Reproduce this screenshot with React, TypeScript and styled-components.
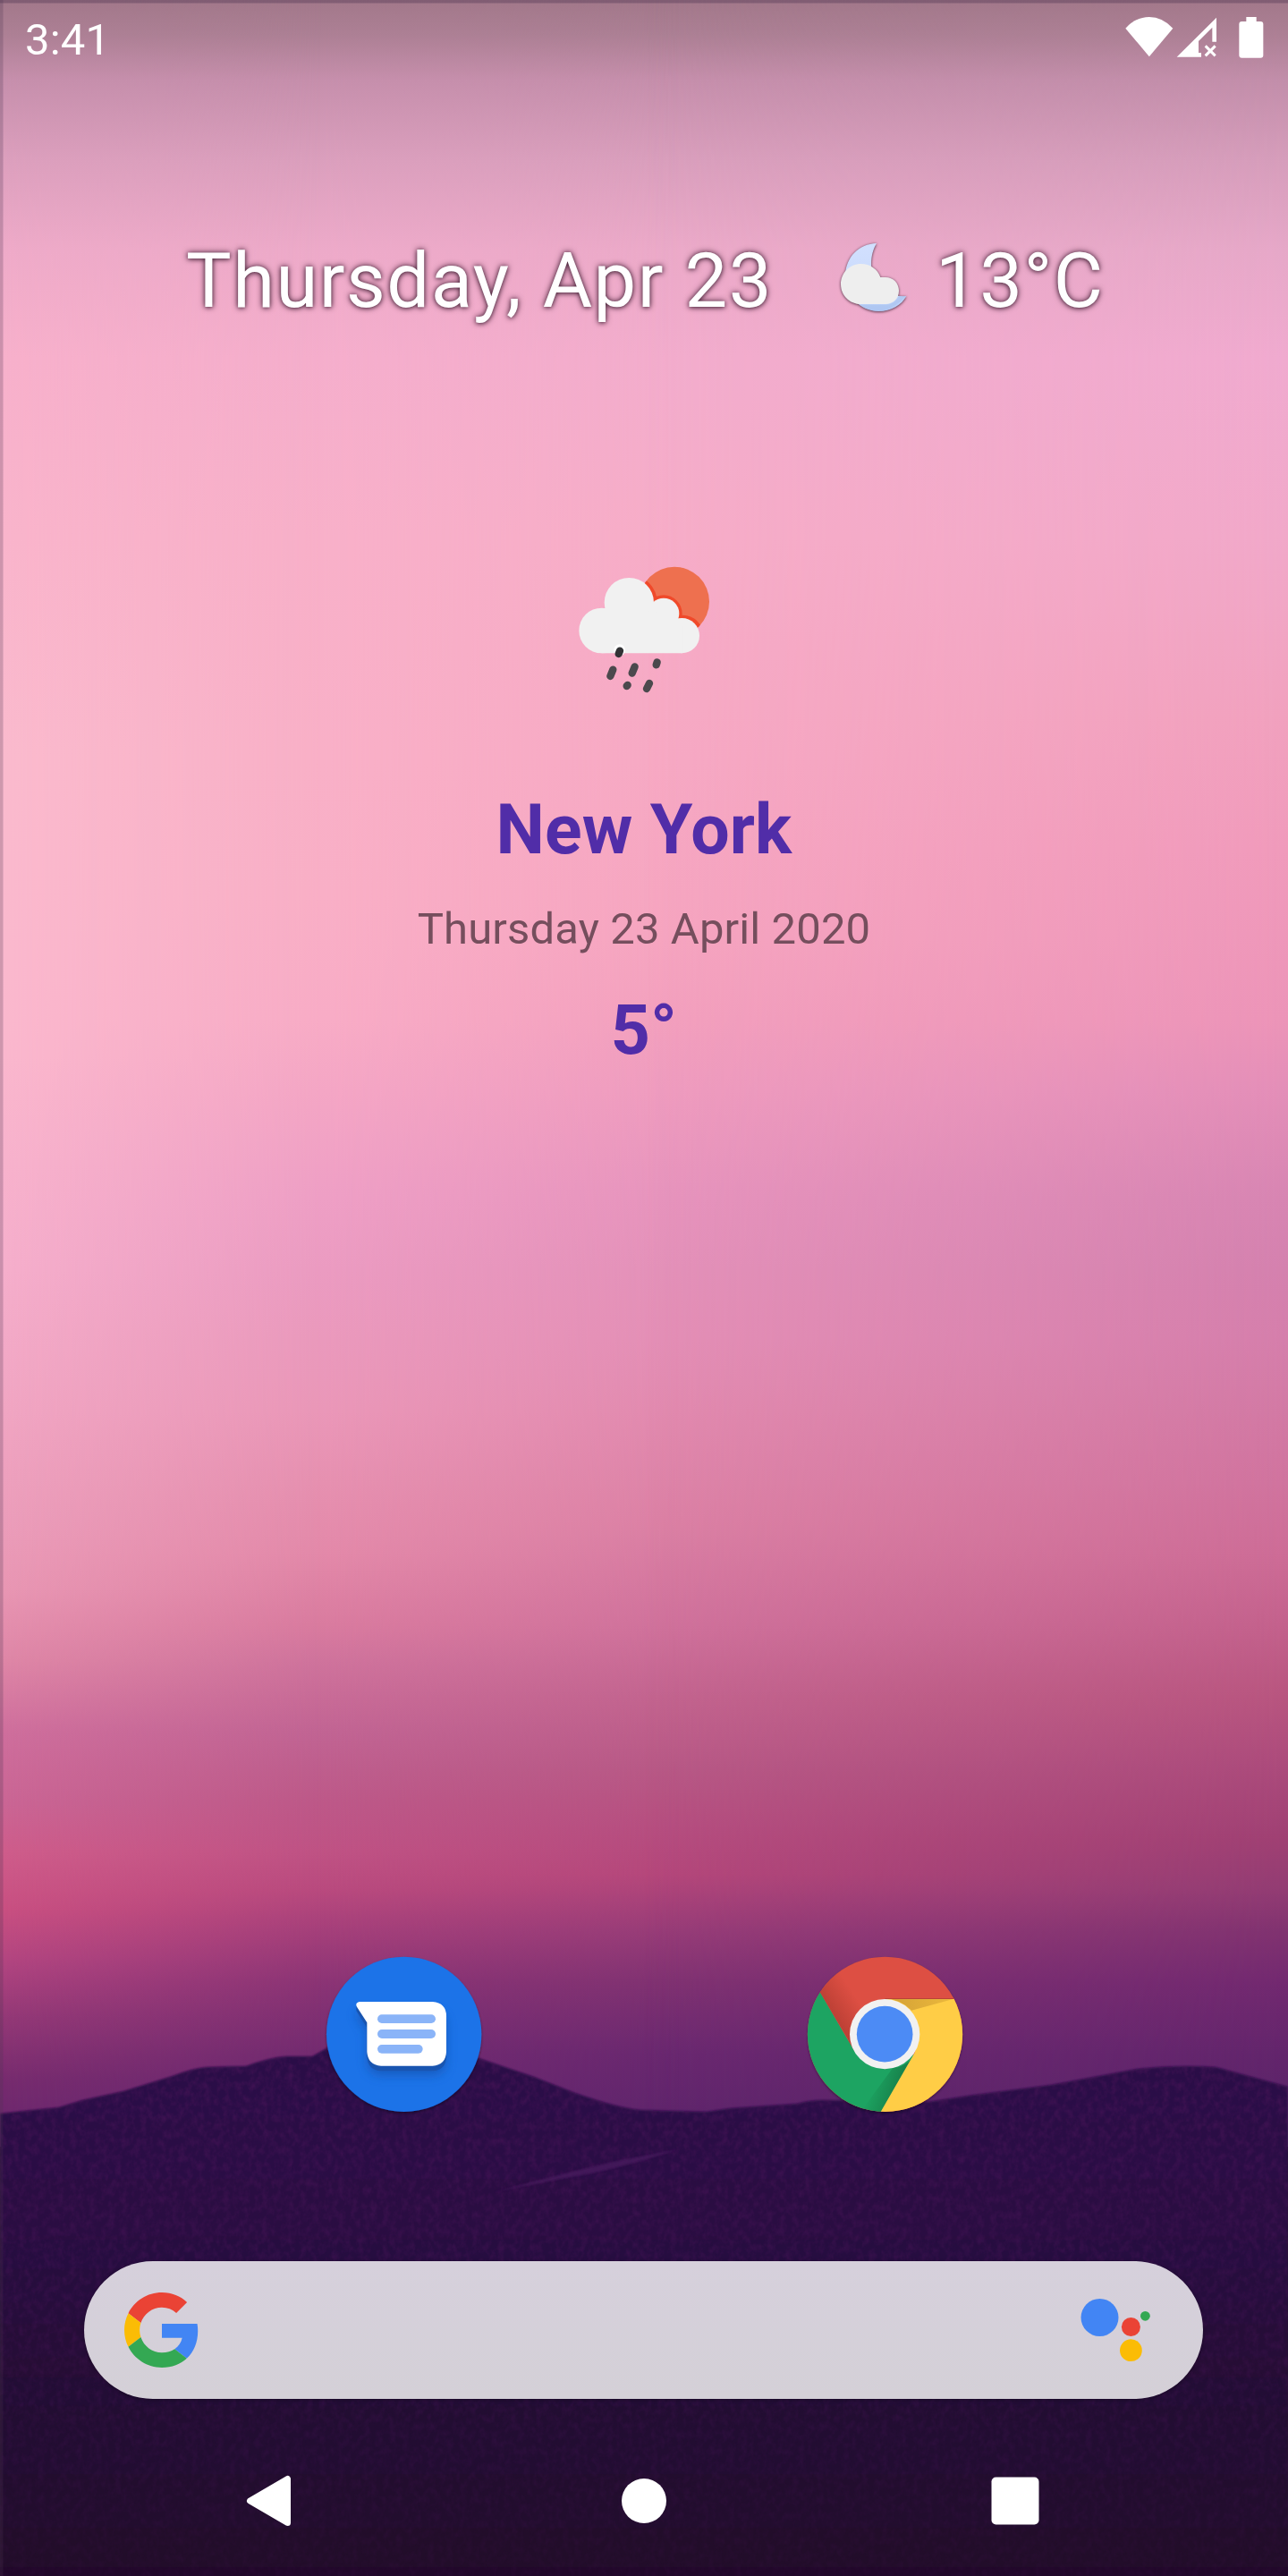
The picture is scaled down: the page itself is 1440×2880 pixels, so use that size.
import React from "react";
import styled, { createGlobalStyle } from "styled-components";

const GlobalStyle = createGlobalStyle`
  body { margin: 0; background: #220a2d; }
  svg { display: block; }
`;

const Screen = styled.main`
  position: relative;
  width: 1440px;
  height: 2880px;
  overflow: hidden;
  display: flex;
  flex-direction: column;
  color: #fff;
  font-family: Roboto, "Liberation Sans", sans-serif;
`;

const WallpaperArt = styled.svg`
  position: absolute;
  inset: 0;
`;

const StatusBar = styled.header`
  position: relative;
  height: 88px;
  padding: 0 27px 0 28px;
  display: flex;
  align-items: center;
  justify-content: space-between;
`;

const Clock = styled.span`
  margin-top: 2px;
  font-size: 49px;
  line-height: 60px;
  letter-spacing: 0.2px;
`;

const StatusIconSet = styled.svg`
  margin-top: -2px;
`;

const Glance = styled.section`
  position: relative;
  margin-top: 151px;
  height: 151px;
  padding-left: 208px;
  display: flex;
  align-items: center;
`;

const GlanceText = styled.span`
  font-size: 85px;
  line-height: 101px;
  letter-spacing: 1.45px;
  white-space: nowrap;
  text-shadow: 0 0 7px rgba(40, 10, 30, 0.8), 0 1px 4px rgba(40, 10, 30, 0.5);
`;

const GlanceDate = styled(GlanceText)`
  width: 722px;
`;

const GlanceTemperature = styled(GlanceText)`
  margin-left: 24px;
`;

const GlanceIcon = styled.svg`
  margin-top: -9px;
`;

const Widget = styled.section`
  position: relative;
  margin-top: 220px;
  display: flex;
  flex-direction: column;
  align-items: center;
`;

const Strong = styled.div<{ $top: number }>`
  margin-top: ${(p) => p.$top}px;
  font-size: 77px;
  line-height: 90px;
  font-weight: 700;
  letter-spacing: 0.15px;
  color: #512da8;
`;

const WidgetDate = styled.div`
  margin-top: 36px;
  font-size: 49px;
  line-height: 60px;
  letter-spacing: 0.12px;
  color: #754e5d;
`;

const Dock = styled.nav`
  position: relative;
  margin-top: 973px;
  display: flex;
  justify-content: center;
  gap: 340px;
`;

const SearchBar = styled.div`
  position: relative;
  margin: 148px 95px 0 94px;
  height: 154px;
  box-sizing: border-box;
  padding: 0 58px 0 45px;
  border-radius: 77px;
  background: linear-gradient(#d6d0dc, #d4d0d7);
  box-shadow: 0 1px 4px rgba(0, 0, 0, 0.35);
  display: flex;
  align-items: center;
  justify-content: space-between;
`;

const NavBar = styled.footer`
  position: relative;
  height: 198px;
  padding: 30px 275px 0 275px;
  box-sizing: border-box;
  display: flex;
  align-items: center;
  justify-content: space-between;
`;

type Stop = [number, string];

const LEFT: Stop[] = [
  [0, "#a2788a"], [40, "#ad8095"], [90, "#c68fac"], [180, "#dc9fbd"], [280, "#eeaac8"], [400, "#f7b0cb"],
  [600, "#f9b4cb"], [850, "#fabacd"], [1180, "#fab7cd"], [1300, "#f7b2cc"], [1419, "#f5aecb"], [1578, "#f0a5c2"],
  [1698, "#eb9dba"], [1777, "#e896b3"], [1857, "#de86a6"], [1937, "#ce6e9c"], [2016, "#ca6594"],
  [2072, "#ce5c8a"], [2136, "#c84f81"], [2192, "#b24580"], [2256, "#933876"], [2327, "#762b6e"], [2380, "#6b276e"],
];
const QUARTER: Stop[] = [
  [0, "#a2788a"], [40, "#ad8095"], [90, "#c68fac"], [180, "#db9fbd"], [280, "#edaac9"], [400, "#f5aecc"],
  [600, "#f8b0c9"], [850, "#f9b0c7"], [1000, "#f9afc6"], [1140, "#f8acc6"], [1220, "#f4a6c5"], [1339, "#ee9fc5"],
  [1419, "#eb9bc1"], [1498, "#ea99bc"], [1578, "#ea97b8"], [1658, "#e690b0"], [1737, "#e389a9"], [1817, "#d97b9f"],
  [1857, "#cf739c"], [1897, "#c86b97"], [1937, "#c16493"], [1977, "#be5e8d"], [2016, "#bd5888"], [2072, "#bf5284"],
  [2112, "#b94a7e"], [2160, "#a43f7a"], [2216, "#8b3475"], [2295, "#732b70"], [2380, "#652570"],
];
const MIDDLE: Stop[] = [
  [0, "#a2788a"], [40, "#ad8095"], [90, "#c68fac"], [180, "#da9fbd"], [280, "#ecaac9"], [400, "#f3adcd"],
  [600, "#f7adc8"], [850, "#f7a9c4"], [1050, "#f6a5c0"], [1140, "#f3a0be"], [1220, "#ef9cbf"], [1339, "#e794bd"],
  [1419, "#e491b9"], [1498, "#e48fb6"], [1578, "#e28aaf"], [1698, "#dc81a5"], [1817, "#d0729c"],
  [1897, "#c3648f"], [1977, "#b85986"], [2050, "#b64d7f"], [2096, "#b5477b"], [2160, "#973c78"],
  [2216, "#803272"], [2295, "#6a2870"], [2380, "#5d246b"],
];
const RIGHT: Stop[] = [
  [0, "#a2788a"], [40, "#ad8095"], [90, "#c28eaa"], [180, "#d69dbb"], [280, "#e6a8c8"], [400, "#f0aacf"],
  [600, "#f1a8c9"], [800, "#f1a1be"], [950, "#f09abb"], [1140, "#ec94b8"], [1220, "#e38eb8"],
  [1339, "#d785b2"], [1419, "#d481ae"], [1498, "#d57eab"], [1578, "#d279a4"], [1658, "#d0739e"], [1737, "#cd6c96"],
  [1817, "#c3618c"], [1897, "#b8557f"], [1977, "#ab4a7b"], [2056, "#9f4073"], [2112, "#923c73"],
  [2160, "#803270"], [2216, "#722970"], [2295, "#63256c"], [2380, "#572467"],
];

function SkyGradient({ id, stops }: { id: string; stops: Stop[] }) {
  return (
    <linearGradient id={id} gradientUnits="userSpaceOnUse" x1="0" y1="0" x2="0" y2="2880">
      {stops.map(([y, color]) => (
        <stop key={y} offset={y / 2880} stopColor={color} />
      ))}
    </linearGradient>
  );
}

function FadeMask({ id, from, to }: { id: string; from: number; to: number }) {
  return (
    <>
      <linearGradient id={`${id}Fade`} gradientUnits="userSpaceOnUse" x1={from} y1="0" x2={to} y2="0">
        <stop offset="0" stopColor="#fff" stopOpacity="1" />
        <stop offset="1" stopColor="#fff" stopOpacity="0" />
      </linearGradient>
      <mask id={id}><rect width="1440" height="2880" fill={`url(#${id}Fade)`} /></mask>
    </>
  );
}

const RIDGE =
  "M0 2363 L37 2359 L66 2356 L92 2348 L138 2338 L193 2321 Q216 2312 232 2311 L275 2310 Q302 2300 320 2299 L349 2299 L367 2289 Q400 2276 440 2278 Q490 2282 535 2301 L597 2322 L643 2340 Q692 2357 716 2359 L790 2361 L817 2357 L891 2352 Q905 2348 920 2348 L1038 2350 L1083 2343 L1175 2331 L1272 2313 Q1315 2308 1359 2311 L1440 2333 V2880 H0Z";

function Wallpaper() {
  return (
    <WallpaperArt width="1440" height="2880" viewBox="0 0 1440 2880" aria-hidden="true">
      <defs>
        <SkyGradient id="skyLeft" stops={LEFT} />
        <SkyGradient id="skyQuarter" stops={QUARTER} />
        <SkyGradient id="skyMiddle" stops={MIDDLE} />
        <SkyGradient id="skyRight" stops={RIGHT} />
        <FadeMask id="leftMask" from={0} to={360} />
        <FadeMask id="quarterMask" from={360} to={760} />
        <FadeMask id="rightMask" from={1440} to={720} />
        <linearGradient id="hill" gradientUnits="userSpaceOnUse" x1="0" y1="2290" x2="0" y2="2880">
          <stop offset="0" stopColor="#2b0b48" />
          <stop offset=".35" stopColor="#290b42" />
          <stop offset=".6" stopColor="#250a36" />
          <stop offset="1" stopColor="#21082a" />
        </linearGradient>
        <linearGradient id="grainFade" gradientUnits="userSpaceOnUse" x1="0" y1="2290" x2="0" y2="2880">
          <stop offset="0" stopColor="#fff" />
          <stop offset=".4" stopColor="#aaa" />
          <stop offset="1" stopColor="#333" />
        </linearGradient>
        <mask id="grainMask"><path d={RIDGE} fill="url(#grainFade)" /></mask>
        <filter id="grain" x="0" y="0" width="100%" height="100%" colorInterpolationFilters="sRGB">
          <feTurbulence type="fractalNoise" baseFrequency=".14 .11" numOctaves="3" seed="4" />
          <feColorMatrix values="0 0 0 0 .28  0 0 0 0 .08  0 0 0 0 .34  2 0 0 0 -.75" />
        </filter>
        <filter id="soft"><feGaussianBlur stdDeviation="1.3" /></filter>
      </defs>
      <rect width="1440" height="2400" fill="url(#skyMiddle)" />
      <rect width="1440" height="2400" fill="url(#skyQuarter)" mask="url(#quarterMask)" />
      <rect width="1440" height="2400" fill="url(#skyLeft)" mask="url(#leftMask)" />
      <rect width="1440" height="2400" fill="url(#skyRight)" mask="url(#rightMask)" />
      <path d={RIDGE} fill="url(#hill)" filter="url(#soft)" />
      <rect y="2870" width="1440" height="10" fill="#21082a" />
      <g mask="url(#grainMask)" opacity=".7">
        <rect y="2270" width="1440" height="610" filter="url(#grain)" />
      </g>
      <path d="M552 2451 Q640 2427 690 2416 L758 2403 Q700 2422 660 2430 Q600 2441 552 2451Z" fill="#4a1a5f" opacity=".75" filter="url(#soft)" />
      <rect width="1440" height="3.5" fill="#4b3350" opacity=".38" />
      <rect width="3.5" height="2880" fill="#4b3350" opacity=".25" />
    </WallpaperArt>
  );
}

function StatusIcons() {
  return (
    <StatusIconSet width="156" height="50" viewBox="80 54 468 150" fill="#fff">
      <path d="M84 95 Q119 57 163.500 57 Q208 57 243 95 L163.500 190Z" />
      <path fillRule="evenodd" d="M256 191 L389 59 V140 H375 V92 L329 138 V177 H338 V191Z" />
      <path d="M352 154 L385 187 M385 154 L352 187" stroke="#fff" strokeWidth="9" />
      <path d="M489 57 H523 V72 H537 Q546 72 546 81 V185 Q546 194 537 194 H474 Q465 194 465 185 V81 Q465 72 474 72 H489Z" />
    </StatusIconSet>
  );
}

function NightCloud() {
  return (
    <GlanceIcon width="92" height="90" viewBox="90 75 276 270">
      <defs>
        <linearGradient id="moon" x1="0" y1="0" x2="0" y2="1">
          <stop offset="0" stopColor="#d2e0ff" />
          <stop offset=".7" stopColor="#c8dafb" />
          <stop offset="1" stopColor="#b6cdf7" />
        </linearGradient>
        <filter id="cloudGlow" x="-20%" y="-20%" width="140%" height="140%" colorInterpolationFilters="sRGB">
          <feDropShadow dx="0" dy="2" stdDeviation="5" floodColor="#281020" floodOpacity=".85" />
        </filter>
      </defs>
      <g filter="url(#cloudGlow)">
        <path d="M240 96 C180 98 138 142 135 202 C136 270 182 324 247 324 C289 324 324 303 340 273 C280 280 222 235 222 166 C222 138 229 115 240 96Z" fill="url(#moon)" />
        <path d="M316 272 Q300 302 270 302 L185 302 Q212 322 247 324 Q289 324 340 273 Q328 275 316 272Z" fill="#a9c1ef" opacity=".6" />
        <path d="M188 165 C218 165 244 183 253 210 H270 C296 210 315 230 315 255 C315 281 296 300 270 300 H188 C149 300 120 270 120 233 C120 196 149 165 188 165Z" fill="#eee" />
      </g>
    </GlanceIcon>
  );
}

function RainCloud() {
  return (
    <svg width="200" height="180" viewBox="0 0 600 540">
      <defs>
        <filter id="iconSoft"><feGaussianBlur stdDeviation="2.3" /></filter>
        <clipPath id="sunClip"><circle cx="402" cy="188" r="117" /></clipPath>
      </defs>
      <g filter="url(#iconSoft)">
        <circle cx="402" cy="188" r="117" fill="#ee704f" />
        <g clipPath="url(#sunClip)" fill="none" stroke="#f04a2a" strokeWidth="20">
          <circle cx="250" cy="191" r="84" />
          <circle cx="366" cy="228" r="52" />
          <circle cx="430" cy="302" r="59" />
        </g>
        <g fill="#f1f1f1">
          <circle cx="250" cy="191" r="83" />
          <circle cx="158" cy="285" r="76" />
          <circle cx="366" cy="228" r="52" />
          <circle cx="427" cy="302" r="59" />
          <path d="M158 210 H260 L366 228 L427 270 V361 H158Z" />
        </g>
        <circle cx="218" cy="350" r="19" fill="#fff" />
        <g stroke="#4b494d" strokeWidth="25" strokeLinecap="round">
          <path d="M219 353 L215 363" stroke="#303236" />
          <path d="M196 416 L187 438" />
          <path d="M269 406 L260 428" />
          <path d="M344 391 L341 400" />
          <path d="M245 468 L242 471" />
          <path d="M318 462 L309 480" />
        </g>
      </g>
    </svg>
  );
}

function MessagesIcon() {
  return (
    <svg width="200" height="210" viewBox="0 0 600 630" role="img" aria-label="Messages">
      <defs>
        <filter id="discShadow" x="-10%" y="-10%" width="120%" height="120%">
          <feDropShadow dx="0" dy="5" stdDeviation="5" floodColor="#000" floodOpacity=".4" />
        </filter>
        <filter id="bubbleBlur" x="-30%" y="-30%" width="160%" height="160%">
          <feGaussianBlur stdDeviation="18" />
        </filter>
        <path id="bubble" d="M156 204 H401 Q447 208 447 252 V372 Q445 416 401 419 H228 Q184 416 181 372 V274 L147 221 Q140 207 156 204Z" />
      </defs>
      <circle cx="305" cy="313" r="260" fill="#1a73e8" filter="url(#discShadow)" />
      <use href="#bubble" y="32" fill="#174ea6" opacity=".6" filter="url(#bubbleBlur)" />
      <use href="#bubble" y="17" fill="#1955b0" />
      <use href="#bubble" y="9" fill="#1955b0" />
      <use href="#bubble" fill="#fff" />
      <g fill="#8ab4f8">
        <rect x="216" y="247" width="195" height="29" rx="14.500" />
        <rect x="216" y="297" width="195" height="30" rx="15" />
        <rect x="216" y="348" width="152" height="29" rx="14.500" />
      </g>
    </svg>
  );
}

function ChromeIcon() {
  return (
    <svg width="200" height="210" viewBox="0 0 600 630" role="img" aria-label="Chrome">
      <defs>
        <clipPath id="chromeDisc"><circle cx="298.500" cy="313" r="260" /></clipPath>
        <linearGradient id="redShade" gradientUnits="userSpaceOnUse" x1="110" y1="235" x2="195" y2="180">
          <stop offset="0" stopColor="#a5352b" stopOpacity=".6" />
          <stop offset="1" stopColor="#a5352b" stopOpacity="0" />
        </linearGradient>
        <linearGradient id="yellowShade" gradientUnits="userSpaceOnUse" x1="340" y1="205" x2="530" y2="200">
          <stop offset="0" stopColor="#d7a437" />
          <stop offset="1" stopColor="#ecb93c" />
        </linearGradient>
        <linearGradient id="greenShade" gradientUnits="userSpaceOnUse" x1="350" y1="470" x2="265" y2="440">
          <stop offset="0" stopColor="#17834c" />
          <stop offset="1" stopColor="#17834c" stopOpacity="0" />
        </linearGradient>
      </defs>
      <circle cx="298.500" cy="313" r="259" fill="#444" filter="url(#discShadow)" />
      <g clipPath="url(#chromeDisc)">
        <rect x="30" y="45" width="540" height="540" fill="#dd4f43" />
        <path d="M80 172 L195 365 L300 313 L240 180 L170 60Z" fill="url(#redShade)" />
        <path d="M80 172 L196 370 L300 430 L405 375 L284 575 H0 V172Z" fill="#1da462" />
        <path d="M325 425 Q370 425 405 375 L284 575 H215Z" fill="url(#greenShade)" />
        <path d="M298 194 H600 V600 H270 L284 573 L398 375 Q430 280 298 194Z" fill="#ffcd46" />
        <path d="M298 194 H530 L387 233 Q350 195 298 194Z" fill="url(#yellowShade)" />
        <path d="M298 193.500 H530" stroke="#b94338" strokeWidth="3" />
      </g>
      <circle cx="297.500" cy="312.500" r="117.500" fill="#f1f1f1" />
      <circle cx="297.500" cy="312.500" r="94" fill="#4c8bf5" />
    </svg>
  );
}

function GoogleLogo() {
  return (
    <svg width="84" height="84" viewBox="0 0 48 48" role="img" aria-label="Google">
      <path fill="#ea4335" d="M24 9.500c3.540 0 6.710 1.220 9.210 3.600l6.850-6.850C35.900 2.380 30.470 0 24 0 14.620 0 6.510 5.380 2.560 13.220l7.980 6.190C12.430 13.720 17.740 9.500 24 9.500z" />
      <path fill="#4285f4" d="M46.980 24.550c0-1.570-.15-3.090-.38-4.550H24v9.020h12.940c-.58 2.960-2.260 5.480-4.780 7.180l7.730 6c4.510-4.180 7.090-10.360 7.090-17.650z" />
      <path fill="#fbbc05" d="M10.530 28.590c-.48-1.450-.76-2.990-.76-4.590s.27-3.140.76-4.590l-7.980-6.190C.92 16.460 0 20.120 0 24c0 3.880.92 7.540 2.560 10.780l7.970-6.190z" />
      <path fill="#34a853" d="M24 48c6.480 0 11.930-2.130 15.890-5.810l-7.730-6c-2.150 1.450-4.920 2.300-8.160 2.300-6.260 0-11.570-4.220-13.470-9.910l-7.980 6.190C6.510 42.620 14.620 48 24 48z" />
    </svg>
  );
}

function AssistantLogo() {
  return (
    <svg width="79" height="84" viewBox="1208 2563 79 84" role="img" aria-label="Assistant">
      <circle cx="1229.500" cy="2591" r="21" fill="#4285f4" />
      <circle cx="1264.400" cy="2601.500" r="10.500" fill="#ea4335" />
      <circle cx="1264.400" cy="2627.700" r="12.400" fill="#fbbc05" />
      <circle cx="1280.400" cy="2589.300" r="5.400" fill="#34a853" />
    </svg>
  );
}

export default function App() {
  return (
    <Screen>
      <GlobalStyle />
      <Wallpaper />
      <StatusBar>
        <Clock>3:41</Clock>
        <StatusIcons />
      </StatusBar>
      <Glance>
        <GlanceDate>Thursday, Apr 23</GlanceDate>
        <NightCloud />
        <GlanceTemperature>13°C</GlanceTemperature>
      </Glance>
      <Widget>
        <RainCloud />
        <Strong $top={93}>New York</Strong>
        <WidgetDate>Thursday 23 April 2020</WidgetDate>
        <Strong $top={38}>5°</Strong>
      </Widget>
      <Dock>
        <MessagesIcon />
        <ChromeIcon />
      </Dock>
      <SearchBar>
        <GoogleLogo />
        <AssistantLogo />
      </SearchBar>
      <NavBar>
        <svg width="60" height="60" viewBox="2 0 60 60" role="img" aria-label="Back">
          <path d="M6.500 30 L48.500 5.500 V54.500Z" fill="#fff" stroke="#fff" strokeWidth="7" strokeLinejoin="round" />
        </svg>
        <svg width="60" height="60" viewBox="0 0 60 60" role="img" aria-label="Home">
          <circle cx="30" cy="30" r="25" fill="#fff" />
        </svg>
        <svg width="60" height="60" viewBox="0 0 60 60" role="img" aria-label="Overview">
          <rect x="3.500" y="3.500" width="53" height="53" rx="5" fill="#fff" />
        </svg>
      </NavBar>
    </Screen>
  );
}
